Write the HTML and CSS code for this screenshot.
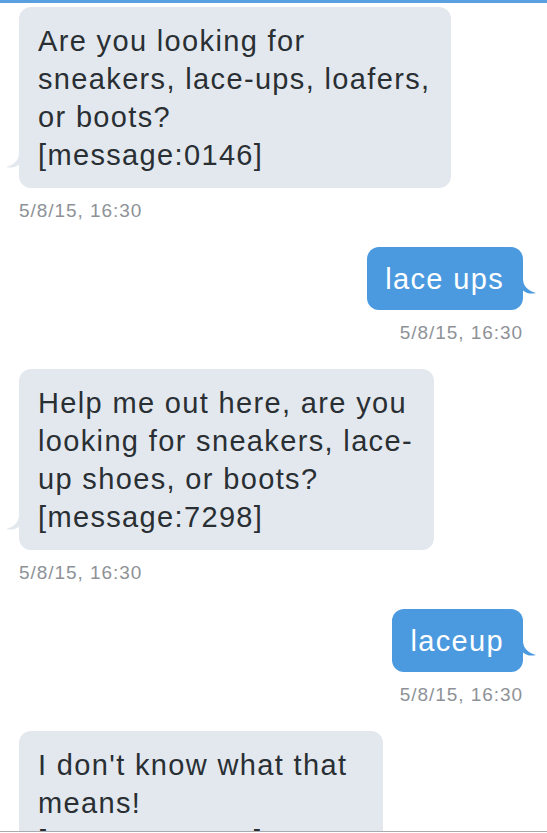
FILE: index.html
```html
<!DOCTYPE html>
<html lang="en">
<head>
<meta charset="utf-8">
<title>Messages</title>
<link rel="stylesheet" href="styles.css">
</head>
<body>
<div class="topbar"></div>
<main class="thread">
  <div class="msg recv">
    <div class="bubble">Are you looking for<br>sneakers, lace-ups, loafers,<br>or boots?<br>[message:0146]<svg class="tail" viewBox="0 0 16 16" width="16" height="16"><path d="M16 0 L13 0 Q13 10 0 14 Q8 16 13 11.5 L16 11.5 Z"/></svg></div>
    <div class="time">5/8/15, 16:30</div>
  </div>
  <div class="msg sent">
    <div class="bubble">lace ups<svg class="tail" viewBox="0 0 16 16" width="16" height="16"><path d="M0 0 L3 0 Q3 10 16 14 Q8 16 3 11.5 L0 11.5 Z"/></svg></div>
    <div class="time">5/8/15, 16:30</div>
  </div>
  <div class="msg recv">
    <div class="bubble">Help me out here, are you<br>looking for sneakers, lace-<br>up shoes, or boots?<br>[message:7298]<svg class="tail" viewBox="0 0 16 16" width="16" height="16"><path d="M16 0 L13 0 Q13 10 0 14 Q8 16 13 11.5 L16 11.5 Z"/></svg></div>
    <div class="time">5/8/15, 16:30</div>
  </div>
  <div class="msg sent">
    <div class="bubble">laceup<svg class="tail" viewBox="0 0 16 16" width="16" height="16"><path d="M0 0 L3 0 Q3 10 16 14 Q8 16 3 11.5 L0 11.5 Z"/></svg></div>
    <div class="time">5/8/15, 16:30</div>
  </div>
  <div class="msg recv">
    <div class="bubble roomy">I don't know what that<br>means!<br>[message:0196]<svg class="tail" viewBox="0 0 16 16" width="16" height="16"><path d="M16 0 L13 0 Q13 10 0 14 Q8 16 13 11.5 L16 11.5 Z"/></svg></div>
    <div class="time">5/8/15, 16:30</div>
  </div>
</main>
<div class="composer"></div>
</body>
</html>
```
FILE: styles.css
```css
html, body {
  margin: 0;
  padding: 0;
  background: #ffffff;
}

body {
  height: 833px;
  overflow: hidden;
  font-family: "Liberation Sans", Arial, sans-serif;
}

.topbar {
  height: 3px;
  background: #5a9fe0;
}

.thread {
  display: flex;
  flex-direction: column;
  gap: 24px;
  padding: 4px 24px 0 19px;
}

.msg {
  display: flex;
  flex-direction: column;
}

.msg.recv {
  align-items: flex-start;
}

.msg.sent {
  align-items: flex-end;
}

.bubble {
  position: relative;
  font-size: 29px;
  line-height: 38px;
  letter-spacing: 1.35px;
  border-radius: 12px;
  white-space: nowrap;
}

.recv .bubble {
  background: #e3e8ee;
  color: #292f33;
  padding: 15px 21px 14px 19px;
}

.recv .bubble.roomy {
  padding-right: 36px;
}

.sent .bubble {
  background: #4b9ae0;
  color: #ffffff;
  padding: 13px 19px 12px 18px;
}

.tail {
  position: absolute;
  display: block;
}

.recv .tail {
  left: -13px;
  bottom: 19px;
  fill: #e3e8ee;
}

.sent .tail {
  right: -13px;
  bottom: 15px;
  fill: #4b9ae0;
}

.time {
  margin-top: 11px;
  font-size: 19px;
  line-height: 24px;
  letter-spacing: 0.95px;
  color: #8e9297;
}

.composer {
  position: fixed;
  left: 0;
  right: 0;
  bottom: 0;
  height: 1px;
  background: #ffffff;
  border-top: 1px solid #a9abae;
}
```
